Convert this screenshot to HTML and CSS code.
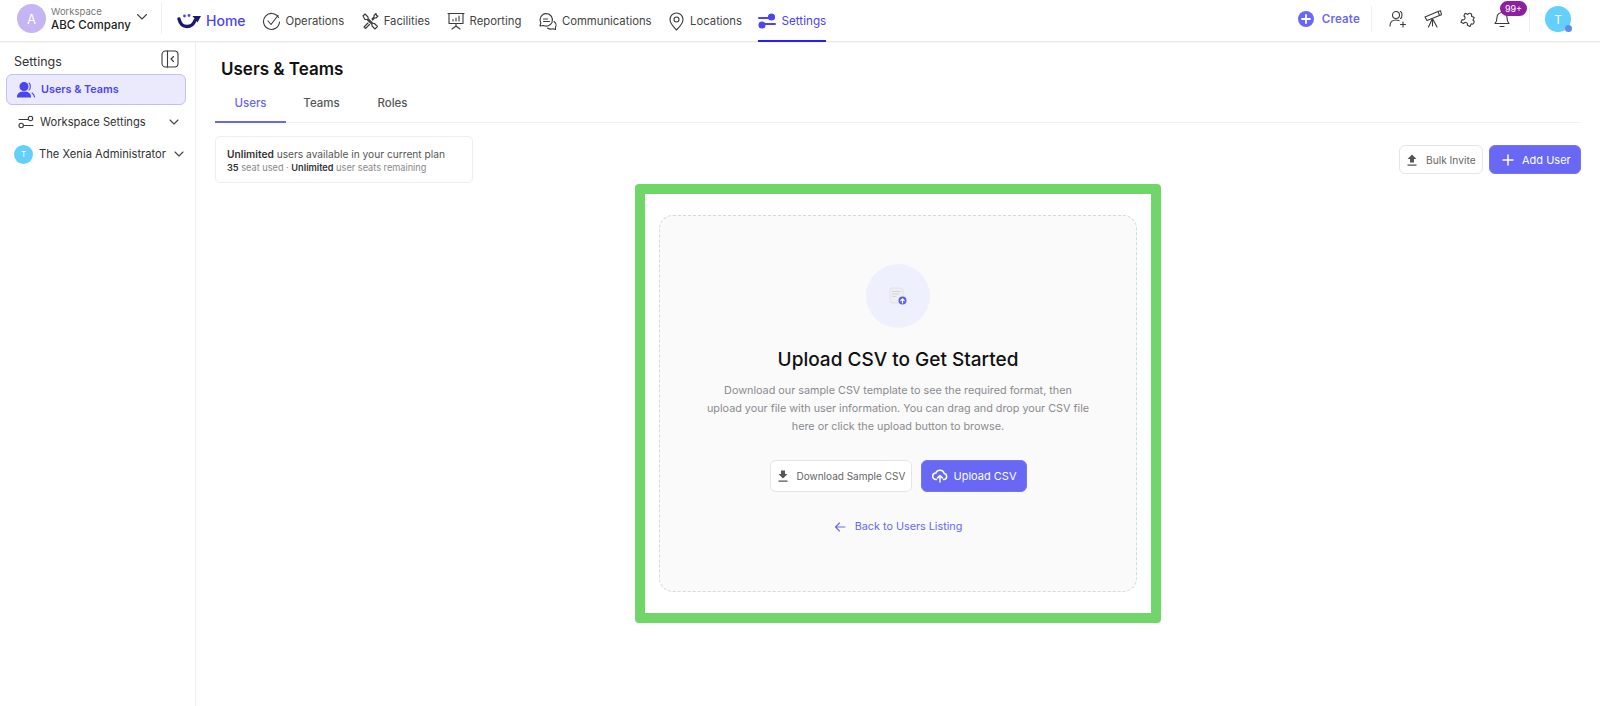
FILE: index.html
```html
<!DOCTYPE html>
<html lang="en">
<head>
    <meta charset="UTF-8">
    <meta name="viewport" content="width=device-width, initial-scale=1.0">
    <title>Users &amp; Teams</title>
    <link rel="stylesheet" href="styles.css">
</head>
<body>
    <header class="topbar">
        <div class="workspace">
            <div class="workspace-avatar">A</div>
            <div class="workspace-text">
                <span class="workspace-label">Workspace</span>
                <span class="workspace-name">ABC Company</span>
            </div>
            <svg class="chevron" width="14" height="14" viewBox="0 0 14 14"><path d="M2.500 4.500 7 9l4.500-4.500"/></svg>
        </div>

        <a class="home-link">
            <svg class="logo" width="25" height="16" viewBox="0 0 25 16">
                <path d="M2 6c1 4.500 4 7.500 8 7.500 4 0 6.500-2 8-6" stroke="#1c1a6e" stroke-width="3.400"/>
                <path d="M15.500 3h8.500l-3.500 6.500z" fill="#1c1a6e" stroke="none"/>
                <circle cx="7.500" cy="3" r="1.400" fill="#4b45f0" stroke="none"/>
                <circle cx="12" cy="2.500" r="1.400" fill="#4b45f0" stroke="none"/>
            </svg>
            <span>Home</span>
        </a>

        <nav class="mainnav">
            <a class="nav-item">
                <svg width="19" height="19" viewBox="0 0 19 19"><path d="M16.500 5.500A8 8 0 1 0 17.500 10"/><path d="m6 9 3 3.500 7-9"/></svg>
                <span>Operations</span>
            </a>
            <a class="nav-item">
                <svg width="18" height="18" viewBox="0 0 18 18"><path d="M2 4 4 2l3 3v1.500l5 5h1.500l3 3-2.500 2.500-3-3V12.500l-5-5H4z"/><path d="M11 7l2-2V3.500L15 1.500l.5 2 1.500.5-2 2h-1.500l-2 2M7 11l-4 4 1.500 1.500 4-4"/></svg>
                <span>Facilities</span>
            </a>
            <a class="nav-item">
                <svg width="18" height="18" viewBox="0 0 18 18"><path d="M1 1.500h16M2 1.500v10h14v-10M9 11.500V14M5 17l4-3 4 3M6 9V7.500M9 9V6M12 9V4"/></svg>
                <span>Reporting</span>
            </a>
            <a class="nav-item">
                <svg width="19" height="19" viewBox="0 0 19 19"><path d="M8 1.500a6.500 6.500 0 0 1 6 9 6.500 6.500 0 0 1-8.500 3L2 14l.8-3A6.500 6.500 0 0 1 8 1.500z"/><path d="M5.500 7h4M5.500 9.500h6M16 9.500c2 1.500 2.500 4 1.500 5.500v2.500l-2.500-.8c-2 .8-4 .3-5.500-.7"/></svg>
                <span>Communications</span>
            </a>
            <a class="nav-item">
                <svg width="17" height="19" viewBox="0 0 17 19"><path d="M8.500 18C4 13.500 2 10.500 2 7.500a6.500 6.500 0 0 1 13 0c0 3-2 6-6.500 10.500z"/><circle cx="8.500" cy="7.500" r="2.500"/></svg>
                <span>Locations</span>
            </a>
            <a class="nav-item active">
                <svg width="18" height="16" viewBox="0 0 18 16"><path d="M1 5h10M7 11h10" stroke-width="2"/><circle cx="13.500" cy="4" r="3" class="filled"/><circle cx="4" cy="12" r="3" class="filled"/></svg>
                <span>Settings</span>
            </a>
        </nav>

        <div class="topbar-right">
            <a class="create-link">
                <span class="create-dot">
                    <svg width="10" height="10" viewBox="0 0 10 10"><path d="M5 1v8M1 5h8"/></svg>
                </span>
                <span>Create</span>
            </a>
            <div class="topbar-divider"></div>
            <div class="top-icons">
                <svg width="18" height="18" viewBox="0 0 18 18"><circle cx="7" cy="5" r="3.500"/><path d="M1 16c0-4 2.500-6 6-6 1.200 0 2 .2 3 .6M11.500 1.500c2 .8 2 6 0 7M14 12v5M11.500 14.500h5"/></svg>
                <svg width="18" height="18" viewBox="0 0 18 18"><path d="m1 7 13-5.500 1.500 4L3 10.500zM9 9.500 13 17M8 9.500 4.500 17M8.500 10v6"/><path d="m14 1.500 2.500-.8 1 4-2 .8"/></svg>
                <svg width="18" height="18" viewBox="0 0 18 18"><path transform="rotate(25 9 9)" d="M4 5h3a2 2 0 1 1 4 0h3v3a2 2 0 1 1 0 4v3h-3a2 2 0 1 0-4 0H4v-3a2 2 0 1 0 0-4z"/></svg>
                <div class="bell">
                    <svg width="16" height="18" viewBox="0 0 16 18"><path d="M1 13.500c1.500-1.500 2-3 2-6a5 5 0 0 1 10 0c0 3 .5 4.500 2 6zM6 16.500h4"/></svg>
                    <span class="badge">99+</span>
                </div>
            </div>
            <div class="topbar-divider"></div>
            <div class="user-avatar">T<span class="user-dot"></span></div>
        </div>
    </header>

    <div class="layout">
        <aside class="sidebar">
            <div class="sidebar-head">
                <span>Settings</span>
                <svg width="18" height="18" viewBox="0 0 18 18"><rect x="1" y="1" width="16" height="16" rx="3.500"/><path d="M6.500 1v16M12.500 6.500 10 9l2.500 2.500"/></svg>
            </div>
            <a class="side-item active">
                <svg width="18" height="16" viewBox="0 0 18 16"><circle cx="7" cy="4.500" r="4" class="filled"/><path d="M.5 15c0-3.500 2.500-5 6.500-5s6.500 1.500 6.500 5z" class="filled"/><path d="M12 1c1.700.8 1.700 6 0 7M15 11c1.500.8 2.300 2.300 2.500 4"/></svg>
                <span>Users &amp; Teams</span>
            </a>
            <a class="side-item">
                <svg width="16" height="14" viewBox="0 0 16 14"><path d="M1 4.500h9M6 10.500h9"/><circle cx="12.500" cy="3.500" r="2.200"/><circle cx="3.200" cy="10.500" r="2.200"/></svg>
                <span>Workspace Settings</span>
                <svg class="chevron" width="12" height="12" viewBox="0 0 12 12"><path d="M2 4l4 4 4-4"/></svg>
            </a>
            <a class="side-item admin">
                <span class="admin-avatar">T</span>
                <span>The Xenia Administrator</span>
                <svg class="chevron" width="12" height="12" viewBox="0 0 12 12"><path d="M2 4l4 4 4-4"/></svg>
            </a>
        </aside>

        <main class="content">
            <h1>Users &amp; Teams</h1>
            <div class="tabs">
                <a class="tab active">Users</a>
                <a class="tab">Teams</a>
                <a class="tab">Roles</a>
            </div>

            <div class="toolbar">
                <div class="plan-card">
                    <p class="plan-main"><b>Unlimited</b> users available in your current plan</p>
                    <p class="plan-sub"><b>35</b> seat used · <b>Unlimited</b> user seats remaining</p>
                </div>
                <div class="toolbar-actions">
                    <button class="btn btn-light bulk">
                        <svg width="12" height="12" viewBox="0 0 12 12"><path d="M6 .5 10.500 5H8v3.500H4V5H1.500zM1.500 10.500h9v1.200h-9z"/></svg>
                        <span>Bulk Invite</span>
                    </button>
                    <button class="btn btn-primary add">
                        <svg class="line" width="12" height="12" viewBox="0 0 12 12"><path d="M6 1v10M1 6h10"/></svg>
                        <span>Add User</span>
                    </button>
                </div>
            </div>

            <section class="highlight">
                <div class="dropzone">
                    <div class="upload-circle">
                        <svg width="18" height="18" viewBox="0 0 18 18">
                            <rect x="1" y="1" width="13" height="15" rx="2" fill="#eceef0" stroke="#e0e2e5"/>
                            <path d="M3.500 4.500h8M3.500 7h6M3.500 9.500h3" stroke="#d2d4d8" stroke-width="1.200"/>
                            <circle cx="13.500" cy="13.500" r="4" fill="#5c5ff0" stroke="none"/>
                            <path d="M13.500 16v-4M11.800 13.600l1.700-1.800 1.700 1.800" stroke="#fff" stroke-width="1.200"/>
                        </svg>
                    </div>
                    <h2>Upload CSV to Get Started</h2>
                    <p class="upload-text">Download our sample CSV template to see the required format, then upload your file with user information. You can drag and drop your CSV file here or click the upload button to browse.</p>
                    <div class="upload-actions">
                        <button class="btn btn-light download">
                            <svg width="12" height="12" viewBox="0 0 12 12"><path d="M4 .5h4V4h2.500L6 8.500 1.500 4H4zM1.500 10.500h9v1.200h-9z"/></svg>
                            <span>Download Sample CSV</span>
                        </button>
                        <button class="btn btn-primary upload">
                            <svg class="line" width="16" height="14" viewBox="0 0 16 14"><path d="M4.500 10.500H4A3.200 3.200 0 0 1 3.800 4.100 4.500 4.500 0 0 1 12.300 4.600 3 3 0 0 1 12 10.500h-.5M8 13V6.500M5.500 9 8 6.500 10.500 9"/></svg>
                            <span>Upload CSV</span>
                        </button>
                    </div>
                    <a class="back-link">
                        <svg width="12" height="12" viewBox="0 0 12 12"><path d="M11 6H1.500M5.500 2l-4 4 4 4"/></svg>
                        <span>Back to Users Listing</span>
                    </a>
                </div>
            </section>
        </main>
    </div>
</body>
</html>
```

FILE: styles.css
```css
* {
    margin: 0;
    padding: 0;
    box-sizing: border-box;
}

body {
    font-family: Inter, "Noto Sans", sans-serif;
    background: #fff;
    color: #222;
    height: 706px;
    overflow: hidden;
    display: flex;
    flex-direction: column;
}

button {
    font-family: inherit;
}

svg {
    flex-shrink: 0;
    fill: none;
    stroke: #3a3a3a;
    stroke-width: 1.1;
    stroke-linecap: round;
    stroke-linejoin: round;
}

/* top bar */
.topbar {
    height: 42px;
    flex-shrink: 0;
    display: flex;
    align-items: stretch;
    border-bottom: 1px solid #e9e9eb;
    box-shadow: 0 1px 1px rgba(0, 0, 0, 0.03);
}

.workspace {
    width: 162px;
    padding-left: 17px;
    display: flex;
    align-items: center;
    border-right: 1px solid #eceff1;
    margin: 3px 0 7px;
}

.workspace-avatar {
    width: 29px;
    height: 29px;
    border-radius: 50%;
    background: #c5b5f5;
    color: #fff;
    font-size: 13px;
    display: flex;
    align-items: center;
    justify-content: center;
    margin-right: 5px;
}

.workspace-text {
    display: flex;
    flex-direction: column;
    width: 84px;
}

.workspace-label {
    font-size: 9.500px;
    line-height: 13px;
    color: #777;
}

.workspace-name {
    font-size: 11.500px;
    line-height: 15px;
    font-weight: 500;
    color: #222;
    white-space: nowrap;
}

.chevron {
    stroke: #444;
    margin-bottom: 4px;
}

.home-link {
    display: flex;
    align-items: center;
    gap: 4px;
    margin: 0 16px 0 15px;
    color: #4b45f0;
    font-size: 14px;
    font-weight: 500;
}

.mainnav {
    display: flex;
    gap: 16.500px;
}

.nav-item {
    display: flex;
    align-items: center;
    gap: 5px;
    font-size: 11.300px;
    color: #444;
    white-space: nowrap;
    height: 42px;
}

.nav-item.active {
    color: #4b45f0;
    border-bottom: 2px solid #2a1ff0;
    padding-top: 2px;
    font-size: 11.700px;
}

.nav-item.active svg {
    stroke: #4b45f0;
}

.filled {
    fill: currentColor;
}

.nav-item.active .filled {
    fill: #4b45f0;
}

.topbar-right {
    margin-left: auto;
    display: flex;
    align-items: center;
    padding-right: 29px;
    padding-bottom: 3px;
}

.create-link {
    display: flex;
    align-items: center;
    gap: 8px;
    font-size: 11.500px;
    font-weight: 600;
    color: #6868f5;
    letter-spacing: 0.2px;
}

.create-dot {
    width: 16px;
    height: 16px;
    border-radius: 50%;
    background: #6868f5;
    display: flex;
    align-items: center;
    justify-content: center;
}

.create-dot svg {
    stroke: #fff;
    stroke-width: 1.800;
}

.topbar-divider {
    width: 1px;
    height: 26px;
    background: #eceef0;
    margin: 0 17px 0 11px;
}

.top-icons {
    display: flex;
    align-items: center;
    gap: 17px;
}

.bell {
    position: relative;
    display: flex;
    margin-right: 1px;
}

.badge {
    position: absolute;
    left: 6px;
    top: -9px;
    width: 27px;
    height: 15px;
    border-radius: 8px;
    background: #8e1f9f;
    color: #fff;
    font-size: 9px;
    display: flex;
    align-items: center;
    justify-content: center;
}

.top-icons + .topbar-divider {
    margin: 0 15px 0 18px;
}

.user-avatar {
    position: relative;
    width: 26px;
    height: 26px;
    border-radius: 50%;
    background: #62d0fb;
    color: #fff;
    font-size: 12px;
    display: flex;
    align-items: center;
    justify-content: center;
}

.user-dot {
    position: absolute;
    right: -1px;
    bottom: 0;
    width: 7px;
    height: 7px;
    border-radius: 50%;
    background: #5a8cf0;
}

/* page layout */
.layout {
    flex: 1;
    display: flex;
    min-height: 0;
}

.sidebar {
    width: 196px;
    flex-shrink: 0;
    border-right: 1px solid #eceef0;
    padding: 6px 9px 0 6px;
}

.sidebar-head {
    height: 26px;
    display: flex;
    align-items: center;
    justify-content: space-between;
    padding: 0 7px 0 8px;
    font-size: 12.500px;
    color: #333;
}

.sidebar-head svg {
    margin-bottom: 4px;
}

.side-item {
    height: 32px;
    display: flex;
    align-items: center;
    gap: 6px;
    padding: 0 6px 0 12px;
    font-size: 11.200px;
    color: #333;
    white-space: nowrap;
}

.side-item .chevron {
    margin: 0 0 0 auto;
}

.side-item.active {
    height: 31px;
    background: #ebe9fc;
    border: 1px solid #c4bff5;
    border-radius: 6px;
    color: #4b45f0;
    font-size: 10.800px;
    font-weight: 600;
    padding-left: 10px;
    margin-bottom: 1px;
}

.side-item.active svg {
    stroke: #4b45f0;
    color: #4b45f0;
}

.side-item.admin {
    padding-left: 8px;
    padding-right: 1px;
}

.admin-avatar {
    width: 19px;
    height: 19px;
    flex-shrink: 0;
    border-radius: 50%;
    background: #62d0fb;
    color: #fff;
    font-size: 8px;
    display: flex;
    align-items: center;
    justify-content: center;
}

/* main content */
.content {
    flex: 1;
    padding: 14px 19px 0 19px;
    min-width: 0;
}

h1 {
    font-size: 17px;
    line-height: 26px;
    font-weight: 600;
    color: #111;
    padding-left: 6px;
}

.tabs {
    display: flex;
    height: 37px;
    margin-top: 4px;
    border-bottom: 1px solid #f1f1f3;
}

.tab {
    width: 71px;
    padding-top: 10px;
    height: 37px;
    text-align: center;
    font-size: 11.500px;
    font-weight: 500;
    color: #555;
}

.tab.active {
    color: #6868f5;
    border-bottom: 2px solid #6868f5;
}

.toolbar {
    height: 48px;
    margin-top: 13px;
    display: flex;
    justify-content: space-between;
}

.plan-card {
    width: 258px;
    height: 47px;
    border: 1px solid #eeeeef;
    border-radius: 5px;
    padding: 10px 11px;
}

.plan-main {
    font-size: 10.200px;
    line-height: 14px;
    color: #555;
}

.plan-sub {
    font-size: 9.200px;
    line-height: 14px;
    color: #888;
}

.plan-card b {
    font-weight: 600;
    color: #333;
}

.toolbar-actions {
    display: flex;
    gap: 6px;
    padding-top: 9px;
}

.btn {
    display: flex;
    align-items: center;
    border-radius: 6px;
    cursor: pointer;
    white-space: nowrap;
    font-weight: 400;
}

.btn-light {
    background: #fff;
    border: 1px solid #e5e5e8;
    color: #666;
    font-size: 10.200px;
}

.btn-light svg {
    fill: #555;
    stroke: none;
}

.btn-primary {
    background: #6868f5;
    border: 1px solid #7474f7;
    color: #fff;
    font-size: 11px;
}

.btn-primary .line {
    stroke: #fff;
    stroke-width: 1.500;
}

.bulk {
    width: 84px;
    height: 29px;
    padding-left: 6px;
    gap: 8px;
}

.add {
    width: 92px;
    height: 29px;
    padding-left: 12px;
    gap: 8px;
}

/* green box */
.highlight {
    width: 526px;
    height: 439px;
    margin: 0 auto;
    border: 10px solid #70d669;
    border-radius: 4px;
    background: #fff;
    padding: 21px 14px;
}

.dropzone {
    height: 100%;
    background: #fafafa;
    border: 1.500px dashed #d8d8da;
    border-radius: 14px;
    padding-top: 48px;
    display: flex;
    flex-direction: column;
    align-items: center;
}

.upload-circle {
    width: 64px;
    height: 64px;
    border-radius: 50%;
    background: #eef1fd;
    display: flex;
    align-items: center;
    justify-content: center;
}

.upload-circle svg {
    stroke-width: 1;
}

h2 {
    margin-top: 18px;
    font-size: 19px;
    line-height: 28px;
    font-weight: 500;
    color: #111;
}

.upload-text {
    width: 383px;
    margin-top: 8px;
    text-align: center;
    font-size: 10.800px;
    line-height: 18px;
    color: #8a8a8e;
}

.upload-actions {
    display: flex;
    gap: 9px;
    margin-top: 24px;
}

.download {
    width: 142px;
    height: 32px;
    padding-left: 6px;
    gap: 8px;
    font-size: 10px;
}

.upload {
    width: 106px;
    height: 32px;
    padding-left: 10px;
    gap: 6px;
}

.back-link {
    display: flex;
    align-items: center;
    gap: 9px;
    margin-top: 28px;
    font-size: 10.800px;
    color: #6868f5;
}

.back-link svg {
    stroke: #6868f5;
}
```
